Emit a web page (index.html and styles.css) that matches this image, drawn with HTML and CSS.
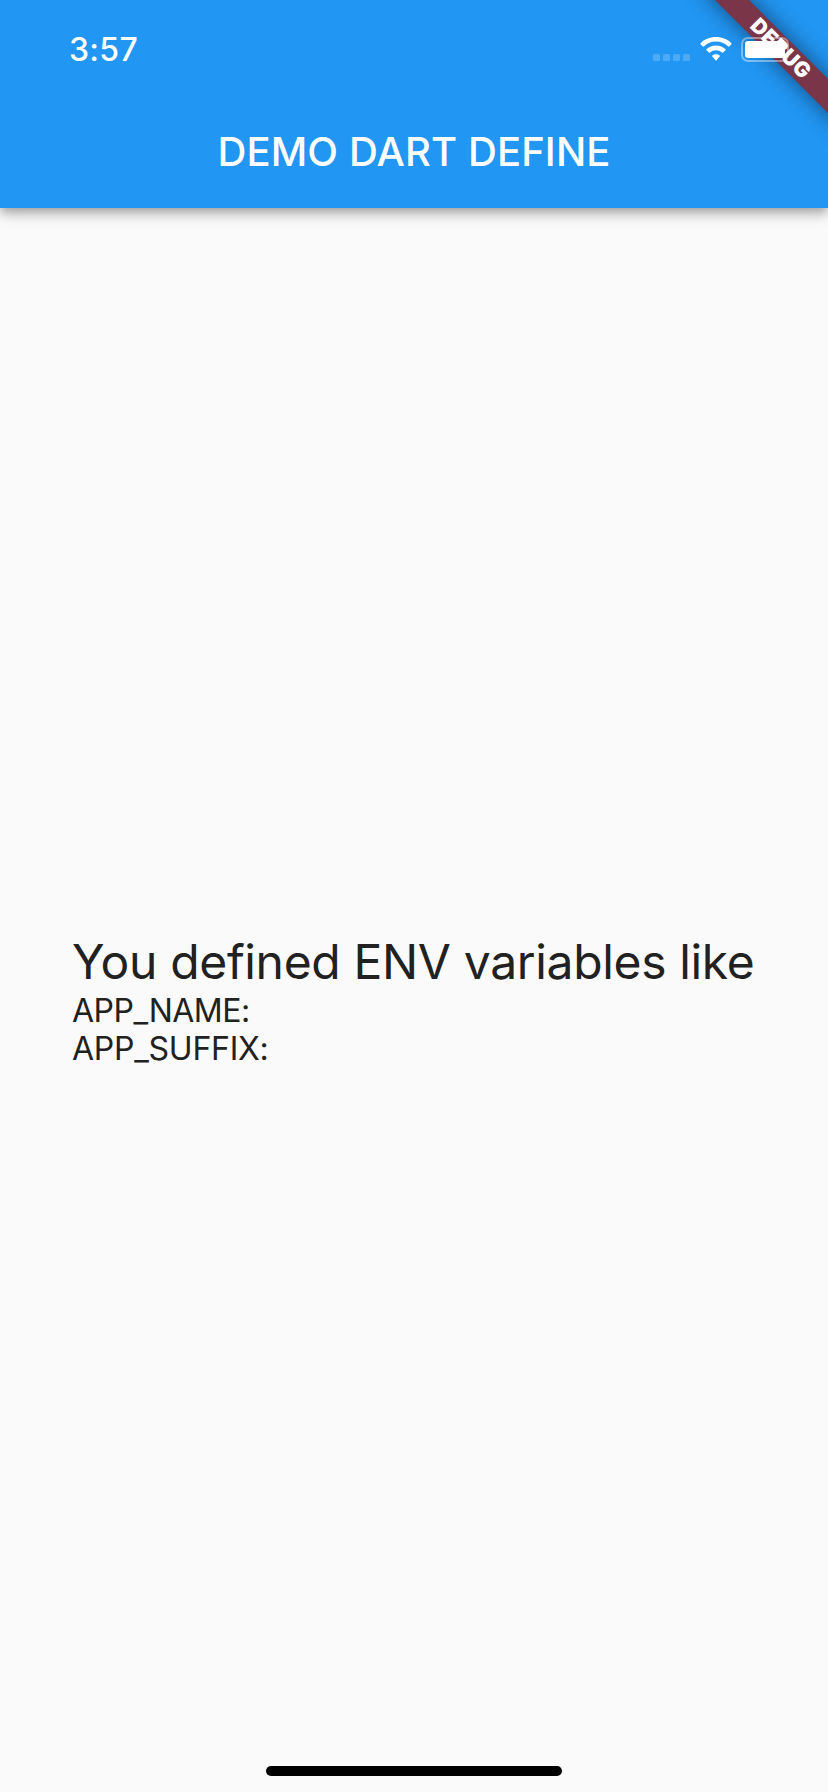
FILE: index.html
```html
<!DOCTYPE html>
<html lang="en">
<head>
<meta charset="utf-8">
<title>DEMO DART DEFINE</title>
<link rel="stylesheet" href="styles.css">
</head>
<body>
<div class="screen">
  <header class="app-bar">
    <div class="status-bar">
      <span class="time">3:57</span>
      <div class="indicators">
        <div class="signal"><i></i><i></i><i></i><i></i></div>
        <svg class="wifi" width="32" height="24" viewBox="0 0 32 24" fill="#fff">
          <path d="M16 0C22.300 0 27.700 2.300 31.400 6.200Q31.900 6.700 31.400 7.200L29.200 9.400Q28.700 9.800 28.200 9.400A17.600 17.600 0 0 0 3.800 9.400Q3.300 9.800 2.800 9.400L.6 7.200Q.1 6.700 .6 6.200C4.300 2.300 9.700 0 16 0Z"/>
          <path d="M16 8.600C19.800 8.600 23.100 10.100 25.500 12.300Q26 12.800 25.500 13.300L23.100 15.600Q22.600 16 22.100 15.600A9.200 9.200 0 0 0 9.900 15.600Q9.400 16 8.900 15.600L6.500 13.300Q6 12.800 6.500 12.300C8.900 10.100 12.200 8.600 16 8.600Z"/>
          <path d="M16 17.300C17.500 17.300 18.700 17.800 19.700 18.600Q20.100 19 19.700 19.400L16.500 23.200Q16 23.700 15.500 23.200L12.300 19.400Q11.900 19 12.300 18.600C13.300 17.800 14.500 17.300 16 17.300Z"/>
        </svg>
        <div class="battery"><div class="charge"></div></div>
      </div>
    </div>
    <h1 class="title">DEMO DART DEFINE</h1>
  </header>
  <main class="content">
    <p class="heading">You defined ENV variables like</p>
    <p class="line name">APP_NAME:</p>
    <p class="line suffix">APP_SUFFIX:</p>
  </main>
  <footer class="home-area"><div class="home-indicator"></div></footer>
  <div class="banner-corner"><div class="banner"><span class="banner-text">DEBUG</span></div></div>
</div>
</body>
</html>
```
FILE: styles.css
```css
* { box-sizing: border-box; }
body { margin: 0; font-family: Inter, "Liberation Sans", sans-serif; }
p, h1 { margin: 0; }
.screen {
  position: relative;
  display: flex;
  flex-direction: column;
  height: 1792px;
  width: 828px;
  overflow: hidden;
  background: #fafafa;
}
.app-bar {
  height: 208px;
  background: #2196f3;
  box-shadow: 0 4px 8px -2px rgba(0,0,0,.2), 0 8px 10px rgba(0,0,0,.14), 0 2px 20px rgba(0,0,0,.12);
}
.status-bar {
  display: flex;
  justify-content: space-between;
  height: 96px;
  padding: 30px 39px 0 69px;
}
.time {
  color: #fff;
  font-size: 32px;
  line-height: 40px;
  font-weight: 500;
  letter-spacing: .3px;
}
.indicators { display: flex; align-items: flex-start; padding-top: 7px; }
.signal { display: flex; gap: 3px; margin: 17px 9.500px 0 0; }
.signal i { width: 7px; height: 7px; border-radius: 1.500px; background: rgba(255,255,255,.2); }
.wifi { display: block; margin-right: 9.500px; }
/* The status icons sit above the corner banner. */
.battery {
  position: relative;
  z-index: 3;
  width: 48px;
  height: 25px;
  padding: 2px;
  border: 2px solid rgba(255,255,255,.4);
  border-radius: 7px;
}
.charge { height: 17px; width: 40px; background: #fff; border-radius: 3px; }
.title {
  height: 112px;
  line-height: 112px;
  text-align: center;
  color: #fff;
  font-size: 40px;
  font-weight: 500;
  letter-spacing: .12px;
}
.content {
  flex: 1;
  display: flex;
  flex-direction: column;
  justify-content: center;
  padding: 0 72px;
  color: #212121;
}
.heading { font-size: 48px; line-height: 58px; margin-bottom: 1px; white-space: nowrap; letter-spacing: -.34px; }
.line { font-size: 32px; line-height: 38px; }
.name { letter-spacing: -.5px; }
.suffix { letter-spacing: -.25px; }
.home-area { position: absolute; left: 0; right: 0; bottom: 16px; display: flex; justify-content: center; }
.home-indicator { width: 296px; height: 10px; border-radius: 5px; background: #000; }
.banner-corner {
  position: absolute;
  z-index: 2;
  top: 0;
  right: 0;
  width: 200px;
  height: 200px;
  overflow: hidden;
}
.banner {
  position: absolute;
  left: 52px;
  top: 36px;
  width: 200px;
  height: 24px;
  transform: rotate(45deg);
  display: flex;
  align-items: center;
  justify-content: center;
  background: #7b3548;
  box-shadow: 0 0 22px rgba(0,0,0,.5);
}
.banner-text { color: #fff; font-size: 21px; line-height: 24px; font-weight: 900; letter-spacing: .5px; padding-left: 2px; }
```
